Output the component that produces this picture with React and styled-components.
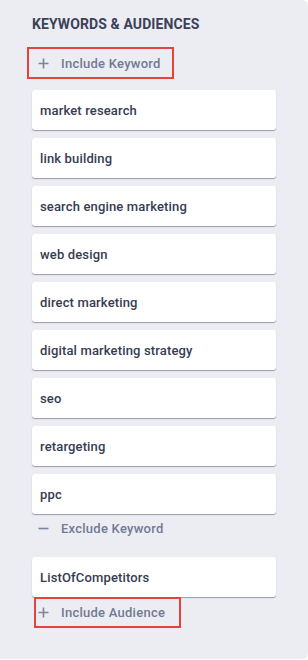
import React from 'react';
import styled, { createGlobalStyle } from 'styled-components';

const GlobalStyle = createGlobalStyle`
    html, body {
        margin: 0;
        padding: 0;
        background: #ffffff;
    }
    body {
        font-family: Roboto, "Liberation Sans", Arial, sans-serif;
        -webkit-font-smoothing: antialiased;
    }
`;

const Panel = styled.div`
    width: 308px;
    height: 659px;
    box-sizing: border-box;
    background: #ecedf3;
    border-radius: 0 6px 6px 0;
    padding: 16px 32px 0 32px;
    display: flex;
    flex-direction: column;
`;

const Title = styled.div`
    font-size: 14px;
    font-weight: 700;
    line-height: 17px;
    letter-spacing: 0.1px;
    color: #3b4159;
    text-transform: uppercase;
`;

const Action = styled.div`
    display: flex;
    align-items: center;
    gap: 12px;
    height: ${(p) => p.height || 28}px;
    color: #717a92;
    font-size: 13px;
    font-weight: 500;
    letter-spacing: 0.25px;
    cursor: pointer;
`;

const Highlight = styled.div`
    align-self: flex-start;
    box-sizing: border-box;
    border: 2px solid #e5443e;
    margin-top: ${(p) => p.top}px;
    margin-left: ${(p) => p.left}px;
    padding-left: ${(p) => p.padLeft}px;
    width: 147px;
`;

const CardList = styled.div`
    display: flex;
    flex-direction: column;
    gap: 8px;
    margin-top: ${(p) => p.top}px;
`;

const Card = styled.div`
    height: 40px;
    box-sizing: border-box;
    background: #ffffff;
    border-radius: 3px;
    box-shadow: 0 1px 1px rgba(120, 126, 148, 0.75);
    padding: 0 8px;
    display: flex;
    align-items: center;
    font-size: 13px;
    font-weight: 500;
    letter-spacing: 0.15px;
    color: #363c50;
`;

const PlainAction = styled(Action)`
    margin-left: 6px;
`;

const Plus = () => (
    <svg width="11" height="11" viewBox="0 0 11 11">
        <path d="M5.5 0.5v10M0.5 5.5h10" stroke="#7c849b" strokeWidth="1.6" />
    </svg>
);

const Minus = () => (
    <svg width="11" height="11" viewBox="0 0 11 11">
        <path d="M0.5 5.5h10" stroke="#7c849b" strokeWidth="1.6" />
    </svg>
);

const keywords = [
    'market research',
    'link building',
    'search engine marketing',
    'web design',
    'direct marketing',
    'digital marketing strategy',
    'seo',
    'retargeting',
    'ppc',
];

export default function App() {
    return (
        <>
            <GlobalStyle />
            <Panel>
                <Title>Keywords &amp; Audiences</Title>
                <Highlight top={14} left={-5} padLeft={9}>
                    <Action height={28}>
                        <Plus />
                        Include Keyword
                    </Action>
                </Highlight>
                <CardList top={11}>
                    {keywords.map((k) => (
                        <Card key={k}>{k}</Card>
                    ))}
                </CardList>
                <PlainAction height={28}>
                    <Minus />
                    Exclude Keyword
                </PlainAction>
                <CardList top={15}>
                    <Card>ListOfCompetitors</Card>
                </CardList>
                <Highlight top={0} left={2} padLeft={2}>
                    <Action height={27}>
                        <Plus />
                        Include Audience
                    </Action>
                </Highlight>
            </Panel>
        </>
    );
}
